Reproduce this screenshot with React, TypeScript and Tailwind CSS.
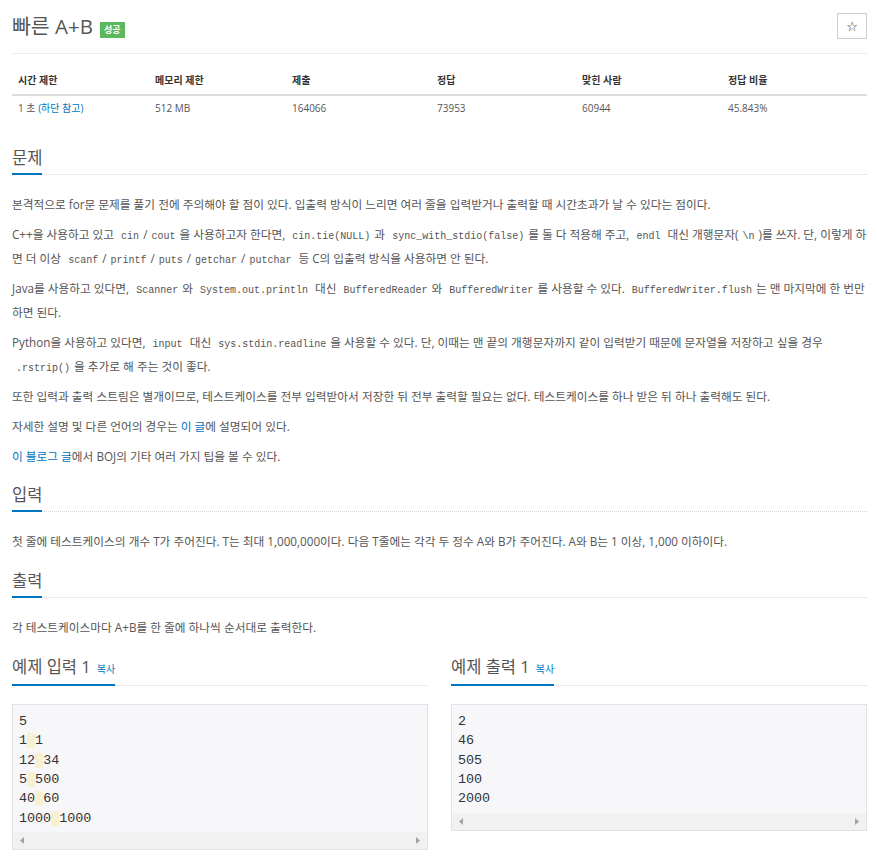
import React from "react";

const stats = [
  { head: "시간 제한", w: "w-[137px]" },
  { head: "메모리 제한", w: "w-[137px]" },
  { head: "제출", w: "w-[145px]" },
  { head: "정답", w: "w-[145px]" },
  { head: "맞힌 사람", w: "w-[146px]" },
  { head: "정답 비율", w: "w-[145px]" },
];

const sampleIn = ["5", "1 1", "12 34", "5 500", "40 60", "1000 1000"];
const sampleOut = ["2", "46", "505", "100", "2000"];

const Code = ({ children }: { children: React.ReactNode }) => (
  <code className="font-['Liberation_Mono',monospace] text-[10px] leading-none px-[4px]">
    {children}
  </code>
);

const A = ({ children }: { children: React.ReactNode }) => (
  <a className="text-[#0076c0]">{children}</a>
);

const Heading = ({ children }: { children: React.ReactNode }) => (
  <div className="flex border-b border-dotted border-[#d5d5d5]">
    <h3 className="text-[16.5px] leading-[24px] pb-[3px] border-b-2 border-[#0076c0] -mb-px text-[#555] font-normal">
      {children}
    </h3>
  </div>
);

const Arrow = ({ right }: { right?: boolean }) => (
  <svg width="4" height="7" viewBox="0 0 4 7">
    <polygon
      points={right ? "0,0 4,3.5 0,7" : "4,0 0,3.5 4,7"}
      fill="#a3a3a3"
    />
  </svg>
);

const Sample = ({ title, lines }: { title: string; lines: string[] }) => (
  <div>
    <div className="flex border-b border-dotted border-[#d5d5d5]">
      <h3 className="text-[16.5px] leading-[24px] pb-[3px] border-b-2 border-[#0076c0] -mb-px text-[#555] font-normal flex items-baseline">
        {title}
        <span className="ml-[6px] text-[10px] text-[#0076c0]">복사</span>
      </h3>
    </div>
    <div className="mt-[18px] border border-[#e1e1e8] bg-[#f7f7f9]">
      <pre className="font-['Liberation_Mono',monospace] text-[13.4px] leading-[19.33px] text-[#333] px-[6px] pt-[7px] pb-[4px]">
        {lines.map((ln, i) => {
          const parts = ln.split(" ");
          return (
            <div key={i}>
              {parts.map((p, j) => (
                <React.Fragment key={j}>
                  {j > 0 && <span className="bg-[#f8f0d0]"> </span>}
                  {p}
                </React.Fragment>
              ))}
            </div>
          );
        })}
      </pre>
      <div className="h-[17px] bg-[#f1f1f1] flex items-center justify-between px-[7px]">
        <Arrow />
        <Arrow right />
      </div>
    </div>
  </div>
);

export default function App() {
  const p = "text-[11.7px] leading-[24px] mb-[6px]";
  return (
    <div className="bg-white min-h-[858px] pl-[12px] pr-[10px] pt-[12px] text-[#555] font-['Open_Sans','Noto_Sans_CJK_KR',sans-serif]">
      {/* title */}
      <div className="flex items-center justify-between h-[28px]">
        <div className="flex items-center">
          <h1 className="text-[20.5px] leading-[28px] text-[#555] font-normal">빠른 A+B</h1>
          <span className="ml-[7px] mt-[7px] h-[16px] px-[4px] bg-[#5cb85c] text-white text-[9px] font-bold leading-[16px]">
            성공
          </span>
        </div>
        <button className="w-[30px] h-[26px] border border-[#ccc] bg-white flex items-center justify-center text-[13px] text-[#222] font-['DejaVu_Sans',sans-serif] leading-none">
          ☆
        </button>
      </div>
      <div className="mt-[13px] border-t border-[#eee]" />

      {/* stats */}
      <table className="mt-[12px] w-full table-fixed text-[10px]">
        <thead>
          <tr className="h-[29px] border-b-2 border-[#ddd]">
            {stats.map((s) => (
              <th key={s.head} className={`${s.w} text-left pl-[6px] font-bold text-[#333]`}>
                {s.head}
              </th>
            ))}
          </tr>
        </thead>
        <tbody>
          <tr className="h-[25px]">
            <td className="pl-[6px]">
              1 초 <A>(하단 참고)</A>
            </td>
            <td className="pl-[6px]">512 MB</td>
            <td className="pl-[6px]">164066</td>
            <td className="pl-[6px]">73953</td>
            <td className="pl-[6px]">60944</td>
            <td className="pl-[6px]">45.843%</td>
          </tr>
        </tbody>
      </table>

      {/* 문제 */}
      <section className="mt-[26px]">
        <Heading>문제</Heading>
        <div className="mt-[17px]">
          <p className={p}>
            본격적으로 for문 문제를 풀기 전에 주의해야 할 점이 있다. 입출력 방식이 느리면 여러 줄을 입력받거나 출력할 때 시간초과가 날 수 있다는 점이다.
          </p>
          <p className={p}>
            C++을 사용하고 있고 <Code>cin</Code>/<Code>cout</Code>을 사용하고자 한다면, <Code>cin.tie(NULL)</Code>과 <Code>sync_with_stdio(false)</Code>를 둘 다 적용해 주고, <Code>endl</Code> 대신 개행문자(<Code>\n</Code>)를 쓰자. 단, 이렇게 하면 더 이상 <Code>scanf</Code>/<Code>printf</Code>/<Code>puts</Code>/<Code>getchar</Code>/<Code>putchar</Code> 등 C의 입출력 방식을 사용하면 안 된다.
          </p>
          <p className={p}>
            Java를 사용하고 있다면, <Code>Scanner</Code>와 <Code>System.out.println</Code> 대신 <Code>BufferedReader</Code>와 <Code>BufferedWriter</Code>를 사용할 수 있다. <Code>BufferedWriter.flush</Code>는 맨 마지막에 한 번만 하면 된다.
          </p>
          <p className={p}>
            Python을 사용하고 있다면, <Code>input</Code> 대신 <Code>sys.stdin.readline</Code>을 사용할 수 있다. 단, 이때는 맨 끝의 개행문자까지 같이 입력받기 때문에 문자열을 저장하고 싶을 경우 <Code>.rstrip()</Code>을 추가로 해 주는 것이 좋다.
          </p>
          <p className={p}>
            또한 입력과 출력 스트림은 별개이므로, 테스트케이스를 전부 입력받아서 저장한 뒤 전부 출력할 필요는 없다. 테스트케이스를 하나 받은 뒤 하나 출력해도 된다.
          </p>
          <p className={p}>
            자세한 설명 및 다른 언어의 경우는 <A>이 글</A>에 설명되어 있다.
          </p>
          <p className={p}>
            <A>이 블로그 글</A>에서 BOJ의 기타 여러 가지 팁을 볼 수 있다.
          </p>
        </div>
      </section>

      {/* 입력 */}
      <section className="mt-[15px]">
        <Heading>입력</Heading>
        <p className={`${p} mt-[17px]`}>
          첫 줄에 테스트케이스의 개수 T가 주어진다. T는 최대 1,000,000이다. 다음 T줄에는 각각 두 정수 A와 B가 주어진다. A와 B는 1 이상, 1,000 이하이다.
        </p>
      </section>

      {/* 출력 */}
      <section className="mt-[16px]">
        <Heading>출력</Heading>
        <p className={`${p} mt-[17px]`}>각 테스트케이스마다 A+B를 한 줄에 하나씩 순서대로 출력한다.</p>
      </section>

      {/* 예제 */}
      <div className="mt-[16px] grid grid-cols-2 gap-x-[23px]">
        <Sample title="예제 입력 1" lines={sampleIn} />
        <Sample title="예제 출력 1" lines={sampleOut} />
      </div>
    </div>
  );
}
